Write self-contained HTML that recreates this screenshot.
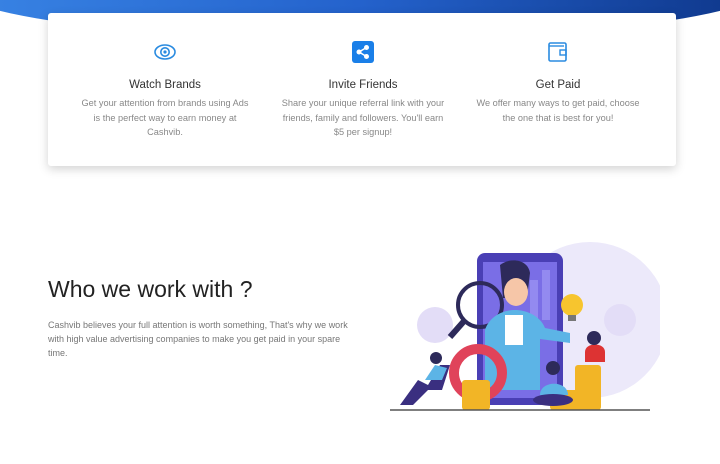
<!DOCTYPE html>
<html><head><meta charset="utf-8"><style>
*{margin:0;padding:0;box-sizing:border-box}
body{width:720px;height:464px;background:#fff;font-family:"Liberation Sans",sans-serif;position:relative;overflow:hidden}
.hero{position:absolute;left:-60px;top:-200px;width:840px;height:240px;border-radius:0 0 50% 50%/0 0 60px 60px;background:linear-gradient(90deg,#3a86e6 0%,#2462cc 50%,#0d3486 100%)}
.card{position:absolute;left:48px;top:13px;width:628px;height:153px;background:#fff;border-radius:3px;box-shadow:0 3px 10px rgba(0,0,0,.18)}
.col{position:absolute;top:0;width:190px;text-align:center}
.col h3{position:absolute;top:66px;width:100%;font-weight:normal;font-size:11.5px;color:#333}
.col p{position:absolute;top:83px;left:8px;width:174px;font-size:9.2px;line-height:14.5px;color:#888}
.col p.n{left:13px;width:164px}
.ic{position:absolute;top:28px;left:84px}
h2{position:absolute;left:48px;top:276px;font-weight:300;font-size:23px;color:#222}
.desc{position:absolute;left:48px;top:318px;width:310px;font-size:9px;line-height:14px;color:#777}
</style></head><body>
<div class="hero"></div>
<div class="card">
 <div class="col" style="left:22px">
  <svg class="ic" width="22" height="22" viewBox="0 0 22 22"><ellipse cx="11" cy="11" rx="10" ry="7" fill="none" stroke="#2a8be0" stroke-width="1.6"/><circle cx="11" cy="11" r="4.2" fill="none" stroke="#2a8be0" stroke-width="1.6"/><circle cx="11" cy="11" r="1.6" fill="#2a8be0"/></svg>
  <h3>Watch Brands</h3><p>Get your attention from brands using Ads is the perfect way to earn money at Cashvib.</p></div>
 <div class="col" style="left:220px">
  <svg class="ic" width="22" height="22" viewBox="0 0 22 22"><rect x="0" y="0" width="22" height="22" rx="3" fill="#1a7fe8"/><circle cx="7" cy="11" r="2.5" fill="#fff"/><circle cx="14.5" cy="6.5" r="2.5" fill="#fff"/><circle cx="14.5" cy="15.5" r="2.5" fill="#fff"/><path d="M7 11L14.5 6.5M7 11L14.5 15.5" stroke="#fff" stroke-width="1.5"/></svg>
  <h3>Invite Friends</h3><p class="n">Share your unique referral link with your friends, family and followers. You'll earn $5 per signup!</p></div>
 <div class="col" style="left:415px">
  <svg class="ic" width="22" height="22" viewBox="0 0 22 22"><rect x="2" y="2" width="17" height="18" rx="1.5" fill="none" stroke="#2a8be0" stroke-width="1.6"/><path d="M2 5H17" stroke="#2a8be0" stroke-width="1.4"/><rect x="13" y="9" width="6" height="5" fill="none" stroke="#2a8be0" stroke-width="1.4"/></svg>
  <h3>Get Paid</h3><p>We offer many ways to get paid, choose the one that is best for you!</p></div>
</div>
<h2>Who we work with ?</h2>
<p class="desc">Cashvib believes your full attention is worth something, That's why we work with high value advertising companies to make you get paid in your spare time.</p>
<svg style="position:absolute;left:380px;top:230px" width="280" height="190" viewBox="0 0 280 190">
 <circle cx="210" cy="90" r="78" fill="#ece9fa"/>
 <circle cx="55" cy="95" r="18" fill="#e3ddf7"/><circle cx="240" cy="90" r="16" fill="#e3ddf7"/>
 <rect x="97" y="23" width="86" height="152" rx="8" fill="#4a3fb5"/>
 <rect x="103" y="32" width="74" height="136" fill="#7a6ee6"/>
 <rect x="150" y="50" width="8" height="40" fill="#938af0"/><rect x="162" y="40" width="8" height="50" fill="#938af0"/>
 <circle cx="100" cy="75" r="22" fill="none" stroke="#2d2a5a" stroke-width="4"/>
 <path d="M85 90L70 107" stroke="#2d2a5a" stroke-width="6"/>
 <path d="M120 35c10-8 28-6 30 8l-3 25h-24z" fill="#2d2a5a"/>
 <ellipse cx="136" cy="62" rx="12" ry="14" fill="#f6c6a8"/>
 <path d="M105 160l0-60c5-15 20-20 30-20s25 5 30 18l25 5 0 10-30-4 0 51z" fill="#5cb4e6"/>
 <rect x="125" y="85" width="18" height="30" fill="#fff"/>
 <circle cx="192" cy="75" r="11" fill="#f7c52e"/><rect x="188" y="85" width="8" height="6" fill="#777"/>
 <circle cx="98" cy="143" r="24" fill="none" stroke="#e0435a" stroke-width="10"/>
 <g fill="#f2b526"><rect x="82" y="150" width="28" height="30" rx="3"/><rect x="195" y="135" width="26" height="45" rx="3"/><rect x="170" y="160" width="28" height="20" rx="3"/></g>
 <path d="M205 122c0-10 20-10 20 0v10h-20z" fill="#d33"/><circle cx="214" cy="108" r="7" fill="#2d2a5a"/>
 <circle cx="173" cy="138" r="7" fill="#2d2a5a"/><path d="M160 165c0-15 28-15 28 0z" fill="#5cb4e6"/><ellipse cx="173" cy="170" rx="20" ry="6" fill="#3a2f80"/>
 <path d="M20 175l18-25 10 5 12-20 10 0-8 25-14 0-15 15z" fill="#3a2f80"/><circle cx="56" cy="128" r="6" fill="#2d2a5a"/><path d="M45 150l10-15 12 3-5 12z" fill="#5cb4e6"/>
 <path d="M10 180H270" stroke="#555" stroke-width="1.5"/>
</svg>
</body></html>
